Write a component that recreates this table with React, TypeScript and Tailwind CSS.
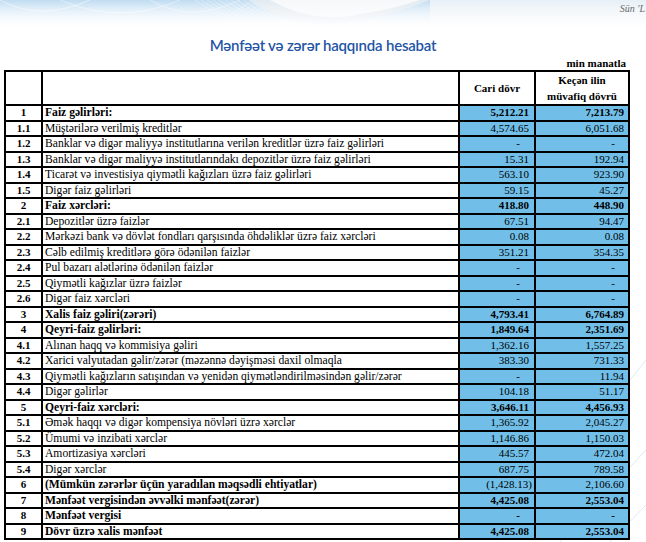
import React from "react"

type Row = {
  no: string
  label: string
  cur: string
  prev: string
  bold?: boolean
}

const ROWS: Row[] = [
  { no: "1", label: "Faiz gəlirləri:", cur: "5,212.21", prev: "7,213.79", bold: true },
  { no: "1.1", label: "Müştərilərə verilmiş kreditlər", cur: "4,574.65", prev: "6,051.68" },
  { no: "1.2", label: "Banklar və digər maliyyə institutlarına verilən kreditlər üzrə faiz gəlirləri", cur: "-", prev: "-" },
  { no: "1.3", label: "Banklar və digər maliyyə institutlarındakı depozitlər üzrə faiz gəlirləri", cur: "15.31", prev: "192.94" },
  { no: "1.4", label: "Ticarət və investisiya qiymətli kağızları üzrə faiz gəlirləri", cur: "563.10", prev: "923.90" },
  { no: "1.5", label: "Digər faiz gəlirləri", cur: "59.15", prev: "45.27" },
  { no: "2", label: "Faiz xərcləri:", cur: "418.80", prev: "448.90", bold: true },
  { no: "2.1", label: "Depozitlər üzrə faizlər", cur: "67.51", prev: "94.47" },
  { no: "2.2", label: "Mərkəzi bank və dövlət fondları qarşısında öhdəliklər üzrə faiz xərcləri", cur: "0.08", prev: "0.08" },
  { no: "2.3", label: "Cəlb edilmiş kreditlərə görə ödənilən faizlər", cur: "351.21", prev: "354.35" },
  { no: "2.4", label: "Pul bazarı alətlərinə ödənilən faizlər", cur: "-", prev: "-" },
  { no: "2.5", label: "Qiymətli kağızlar üzrə faizlər", cur: "-", prev: "-" },
  { no: "2.6", label: "Digər faiz xərcləri", cur: "-", prev: "-" },
  { no: "3", label: "Xalis faiz gəliri(zərəri)", cur: "4,793.41", prev: "6,764.89", bold: true },
  { no: "4", label: "Qeyri-faiz gəlirləri:", cur: "1,849.64", prev: "2,351.69", bold: true },
  { no: "4.1", label: "Alınan haqq və kommisiya gəliri", cur: "1,362.16", prev: "1,557.25" },
  { no: "4.2", label: "Xarici valyutadan gəlir/zərər (məzənnə dəyişməsi daxil olmaqla", cur: "383.30", prev: "731.33" },
  { no: "4.3", label: "Qiymətli kağızların satışından və yenidən qiymətləndirilməsindən gəlir/zərər", cur: "-", prev: "11.94" },
  { no: "4.4", label: "Digər gəlirlər", cur: "104.18", prev: "51.17" },
  { no: "5", label: "Qeyri-faiz xərcləri:", cur: "3,646.11", prev: "4,456.93", bold: true },
  { no: "5.1", label: "Əmək haqqı və digər kompensiya növləri üzrə xərclər", cur: "1,365.92", prev: "2,045.27" },
  { no: "5.2", label: "Ümumi və inzibati xərclər", cur: "1,146.86", prev: "1,150.03" },
  { no: "5.3", label: "Amortizasiya xərcləri", cur: "445.57", prev: "472.04" },
  { no: "5.4", label: "Digər xərclər", cur: "687.75", prev: "789.58" },
  { no: "6", label: "(Mümkün zərərlər üçün yaradılan məqsədli ehtiyatlar)", cur: "(1,428.13)", prev: "2,106.60", bold: true },
  { no: "7", label: "Mənfəət vergisindən əvvəlki mənfəət(zərər)", cur: "4,425.08", prev: "2,553.04", bold: true },
  { no: "8", label: "Mənfəət vergisi", cur: "-", prev: "-", bold: true },
  { no: "9", label: "Dövr üzrə xalis mənfəət", cur: "4,425.08", prev: "2,553.04", bold: true },
]

// row 6 values are regular weight in the source, only the label is bold
const LIGHT_VALUES = new Set(["6"])

function Value({ v, bold }: { v: string; bold: boolean }) {
  if (v === "-") {
    return <span className={bold ? "font-bold pr-[9px]" : "pr-[9px]"}>-</span>
  }
  if (v.startsWith("(")) {
    return <span className="-mr-[3px]">{v}</span>
  }
  return <span className={bold ? "font-bold" : ""}>{v}</span>
}

function Banner() {
  return (
    <div className="relative h-[30px] overflow-hidden bg-gradient-to-b from-[#bfdcf1] via-[#e0eef9] to-white">
      <svg className="absolute inset-0" width="646" height="30" viewBox="0 0 646 30">
        <defs>
          <linearGradient id="fade" x1="0" y1="0" x2="0" y2="1">
            <stop offset="0" stopColor="#fff" stopOpacity="0" />
            <stop offset="1" stopColor="#fff" stopOpacity="1" />
          </linearGradient>
        </defs>
        <path d="M0 0 Q40 22 90 0" fill="none" stroke="#ffffff" strokeOpacity="0.5" strokeWidth="1" />
        <path d="M60 0 Q120 26 180 0" fill="none" stroke="#ffffff" strokeOpacity="0.45" strokeWidth="1" />
        <path d="M150 0 Q190 24 240 0" fill="none" stroke="#ffffff" strokeOpacity="0.4" strokeWidth="1" />
        {Array.from({ length: 14 }).map((_, i) => (
          <path
            key={i}
            d={`M${195 + i * 6} 0 L${235 + i * 6} 26`}
            stroke="#ffffff"
            strokeOpacity="0.6"
            strokeWidth="0.6"
          />
        ))}
        {Array.from({ length: 12 }).map((_, i) => (
          <path
            key={"b" + i}
            d={`M${330 - i * 7} 0 L${290 - i * 7} 26`}
            stroke="#ffffff"
            strokeOpacity="0.5"
            strokeWidth="0.6"
          />
        ))}
        <path d="M250 0 Q290 30 350 22 Q390 16 430 0 Z" fill="#e6ecf1" fillOpacity="0.85" />
        <path d="M270 0 Q310 22 350 16 Q390 10 420 0 Z" fill="#f6f8fa" />
        <path d="M430 0 L646 0 L646 24 L430 24 Z" fill="#f3f6f8" fillOpacity="0.75" />
        <rect x="0" y="0" width="646" height="30" fill="url(#fade)" />
      </svg>
      <span className="absolute right-[1px] top-[1px] text-[10px] italic text-[#6b6b6b] font-['Liberation_Serif',serif]">
        Sün 'L
      </span>
    </div>
  )
}

export default function App() {
  return (
    <div className="relative w-[646px] h-[542px] overflow-hidden bg-white font-['Liberation_Serif',serif] text-black">
      <Banner />

      {/* faint watermark lines */}
      <svg className="absolute left-0 top-[300px] pointer-events-none" width="646" height="242" viewBox="0 0 646 242">
        <path d="M560 242 L646 150" stroke="#e4e8ec" strokeWidth="1" fill="none" />
        <path d="M610 242 L646 205" stroke="#e4e8ec" strokeWidth="1" fill="none" />
        <path d="M630 80 L646 60" stroke="#e4e8ec" strokeWidth="1" fill="none" />
      </svg>

      <h1 className="mt-[5px] text-center text-[15px] leading-[20px] font-semibold text-[#1f55a5] font-['Lato',sans-serif] tracking-[-0.2px]">
        Mənfəət və zərər haqqında hesabat
      </h1>

      <div className="mt-[1px] pr-[20px] text-right text-[11px] leading-[14px] font-bold">min manatla</div>

      <table className="relative ml-[4px] w-[624px] table-fixed border-collapse border-2 border-black text-[11px] leading-[13px]">
        <colgroup>
          <col className="w-[37px]" />
          <col className="w-[417px]" />
          <col className="w-[76px]" />
          <col className="w-[94px]" />
        </colgroup>
        <thead>
          <tr className="h-[33px]">
            <th className="border-2 border-black" />
            <th className="border-2 border-black" />
            <th className="border-2 border-black text-center font-bold">Cari dövr</th>
            <th className="border-2 border-black text-center font-bold leading-[16px]">
              Keçən ilin
              <br />
              müvafiq dövrü
            </th>
          </tr>
        </thead>
        <tbody>
          {ROWS.map((r) => {
            const valBold = !!r.bold && !LIGHT_VALUES.has(r.no)
            return (
              <tr key={r.no} className="h-[15.5px]">
                <td className="border-2 border-black p-0 text-center font-bold">{r.no}</td>
                <td className={`border-2 border-black py-0 pl-[2px] pr-0 whitespace-nowrap overflow-hidden text-[11.6px] ${r.bold ? "font-bold" : ""}`}>
                  {r.label}
                </td>
                <td className="border-2 border-black bg-[#71bfe9] py-0 pl-0 pr-[5px] text-right">
                  <Value v={r.cur} bold={valBold} />
                </td>
                <td className="border-2 border-black bg-[#71bfe9] py-0 pl-0 pr-[4px] text-right">
                  <Value v={r.prev} bold={valBold} />
                </td>
              </tr>
            )
          })}
        </tbody>
      </table>
    </div>
  )
}
